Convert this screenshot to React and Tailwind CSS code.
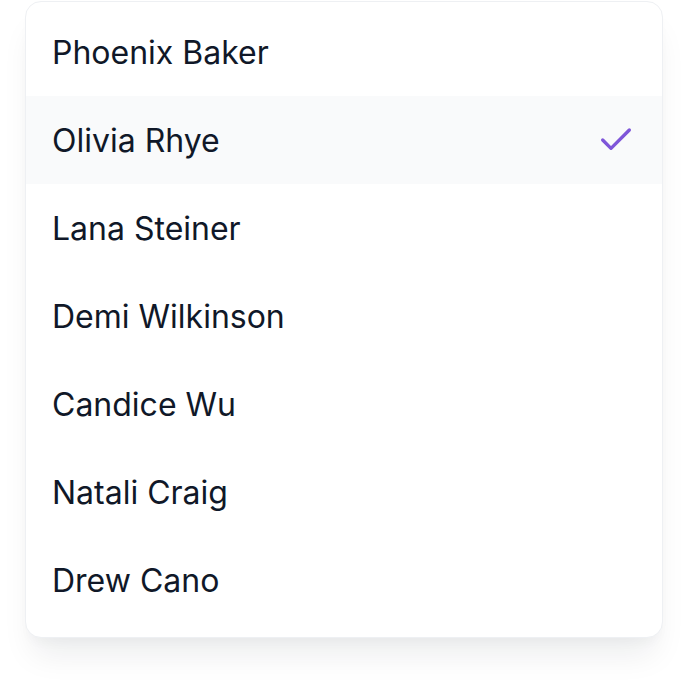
const people = [
  "Phoenix Baker",
  "Olivia Rhye",
  "Lana Steiner",
  "Demi Wilkinson",
  "Candice Wu",
  "Natali Craig",
  "Drew Cano",
];

const selected = "Olivia Rhye";

const App = () => {
  return (
    <div className="w-[688px] h-[688px] bg-white pl-[25px] pt-[1px] font-['Inter',sans-serif]">
      <ul className="w-[638px] h-[637px] bg-white border border-[#eef0f3] rounded-[16px] pt-[6px] pb-[13px] shadow-[0_24px_32px_-8px_rgba(16,24,40,0.08),0_8px_12px_-4px_rgba(16,24,40,0.03)] overflow-hidden">
        {people.map((name) => {
          const active = name === selected;
          return (
            <li
              key={name}
              className={`flex items-center justify-between h-[88px] pl-[26px] pr-[26px] ${
                active ? "bg-[#f9fafb]" : ""
              }`}
            >
              <span className="text-[32px] leading-none text-[#101828] pt-[2px]">{name}</span>
              {active && (
                <svg width="40" height="40" viewBox="0 0 24 24" fill="none">
                  <path
                    d="M20 6L9 17L4 12"
                    stroke="#7f56d9"
                    strokeWidth="2"
                    strokeLinecap="round"
                    strokeLinejoin="round"
                  />
                </svg>
              )}
            </li>
          );
        })}
      </ul>
    </div>
  );
};

export default App;
